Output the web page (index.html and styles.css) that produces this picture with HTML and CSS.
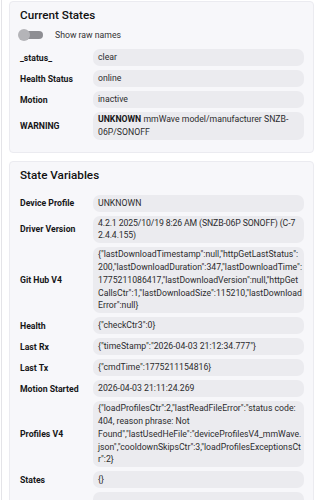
FILE: index.html
```html
<!DOCTYPE html>
<html>
<head>
<meta charset="utf-8">
<link rel="stylesheet" href="styles.css">
</head>
<body>
<div class="page">
  <section class="card">
    <h2 class="card-title">Current States</h2>
    <div class="toggle-row">
      <span class="toggle"><span class="knob"></span></span>
      <span class="toggle-label">Show raw names</span>
    </div>
    <div class="rows">
      <div class="label">_status_</div><div class="value">clear</div>
      <div class="label">Health Status</div><div class="value">online</div>
      <div class="label">Motion</div><div class="value">inactive</div>
      <div class="label">WARNING</div><div class="value"><span><b>UNKNOWN</b> mmWave model/manufacturer SNZB-06P/SONOFF</span></div>
    </div>
  </section>
  <section class="card">
    <h2 class="card-title">State Variables</h2>
    <div class="rows rows-vars">
      <div class="label">Device Profile</div><div class="value">UNKNOWN</div>
      <div class="label">Driver Version</div><div class="value"><span class="tight">4.2.1 2025/10/19 8:26 AM (SNZB-06P SONOFF) (C-7 2.4.4.155)</span></div>
      <div class="label">Git Hub V4</div><div class="value"><span>{"lastDownloadTimestamp":null,"httpGetLastStatus":200,"lastDownloadDuration":347,"lastDownloadTime":1775211086417,"lastDownloadVersion":null,"httpGetCallsCtr":1,"lastDownloadSize":115210,"lastDownloadError":null}</span></div>
      <div class="label">Health</div><div class="value">{"checkCtr3":0}</div>
      <div class="label">Last Rx</div><div class="value">{"timeStamp":"2026-04-03 21:12:34.777"}</div>
      <div class="label">Last Tx</div><div class="value">{"cmdTime":1775211154816}</div>
      <div class="label">Motion Started</div><div class="value">2026-04-03 21:11:24.269</div>
      <div class="label">Profiles V4</div><div class="value"><span>{"loadProfilesCtr":2,"lastReadFileError":"status code: 404, reason phrase: Not Found","lastUsedHeFile":"deviceProfilesV4_mmWave.json","cooldownSkipsCtr":3,"loadProfilesExceptionsCtr":2}</span></div>
      <div class="label">States</div><div class="value">{}</div>
      <div class="label">&nbsp;</div><div class="value">&nbsp;</div>
    </div>
  </section>
</div>
</body>
</html>
```
FILE: styles.css
```css
html, body {
  margin: 0;
  padding: 0;
  background: #ffffff;
}
body {
  font-family: Roboto, "Noto Sans", Arial, sans-serif;
  color: #1c1c1e;
  overflow: hidden;
  height: 500px;
}
.page {
  margin-left: 1px;
  border-left: 1px solid #e4e4e8;
  padding: 1px 4px 0 7px;
  min-height: 499px;
}
.card {
  background: #f7f7fa;
  border: 1px solid #ebebf0;
  border-radius: 4px;
  padding: 6px 9px 12px 10px;
  margin-bottom: 8px;
}
.card-title {
  margin: 0;
  font-size: 11.7px;
  line-height: 14px;
  font-weight: 500;
  color: #111;
}
.toggle-row {
  display: flex;
  align-items: center;
  height: 16px;
  margin-top: 5px;
  margin-bottom: 6px;
}
.toggle {
  position: relative;
  width: 24px;
  height: 8px;
  margin-left: -1px;
  border-radius: 4px;
  background: #8e8e93;
}
.knob {
  position: absolute;
  left: -1px;
  top: -2px;
  width: 12px;
  height: 12px;
  border-radius: 50%;
  background: #b4b4b8;
}
.toggle-label {
  margin-left: 12px;
  font-size: 8.7px;
  color: #333;
}
.rows {
  display: grid;
  grid-template-columns: 73px 1fr;
  row-gap: 4px;
  align-items: center;
}
.rows-vars {
  margin-top: 13px;
}
.label {
  font-size: 8.7px;
  font-weight: 700;
  color: #161618;
}
.value {
  box-sizing: border-box;
  min-height: 17px;
  display: flex;
  align-items: center;
  background: #ebebef;
  border-radius: 7px;
  padding: 1px 1px 1px 5px;
  font-size: 8.7px;
  line-height: 12.8px;
  color: #2c2c2e;
  overflow-wrap: anywhere;
}
.value span {
  min-width: 0;
}
.value .tight {
  letter-spacing: -0.12px;
}
.value b {
  font-weight: 700;
  color: #161618;
}
```
